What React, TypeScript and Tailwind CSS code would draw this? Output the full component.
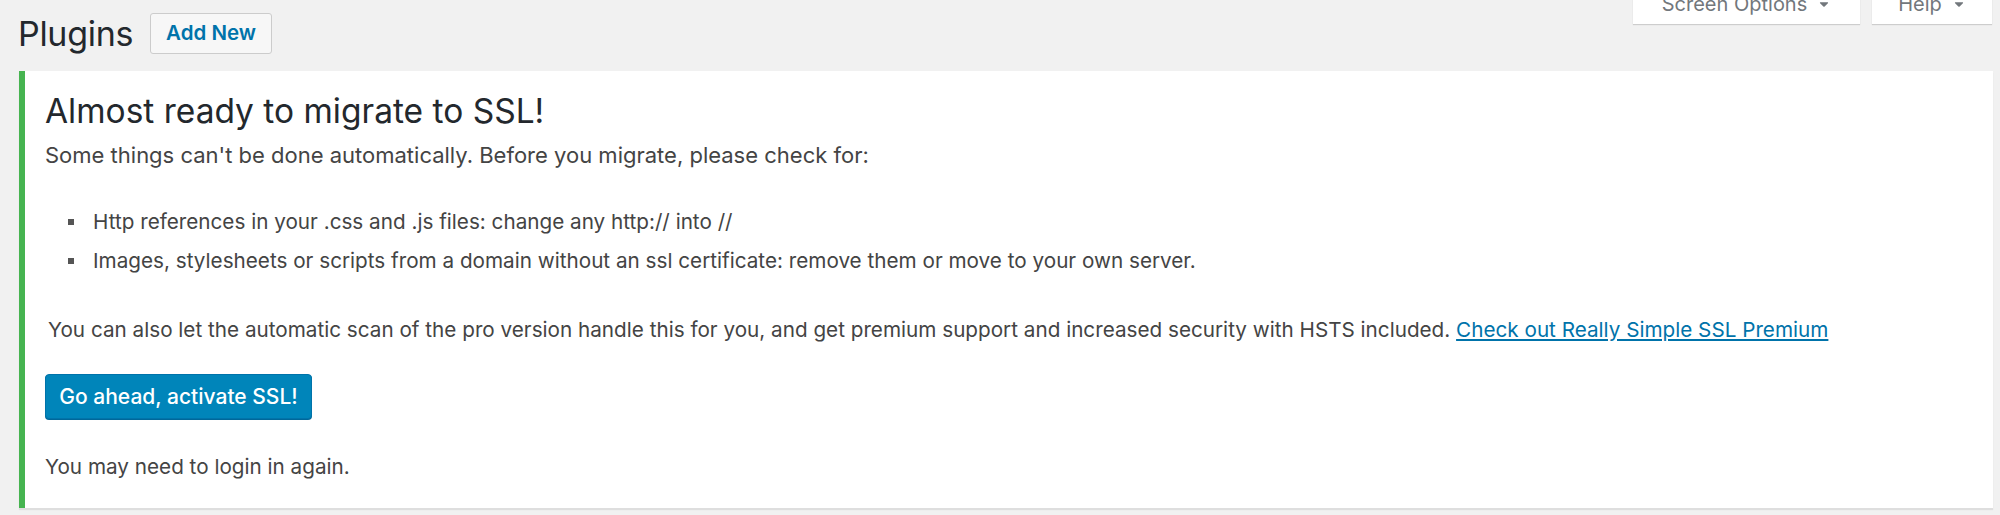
import { FaCaretDown } from 'react-icons/fa';

const bullets = [
  'Http references in your .css and .js files: change any http:// into //',
  'Images, stylesheets or scripts from a domain without an ssl certificate: remove them or move to your own server.',
];

const App = () => {
  return (
    <div className="min-h-[515px] overflow-hidden bg-[#f1f1f1] font-['Inter',sans-serif] text-[#444]">
      {/* header row */}
      <div className="flex items-start justify-between">
        <div className="ml-[18px] flex items-center gap-[17px] pt-[13px]">
          <h1 className="text-[34px] leading-[40px] tracking-[-0.3px] text-[#23282d]">Plugins</h1>
          <button className="h-[41px] rounded-[3px] border border-[#ccc] bg-[#f7f7f7] px-[15px] text-[20.5px] font-semibold text-[#0073aa]">
            Add New
          </button>
        </div>
        <div className="mr-[8px] mt-[-16px] flex gap-[12px]">
          <button className="flex h-[40px] w-[227px] items-center justify-center gap-[10px] bg-white text-[20px] text-[#72777c] shadow-[0_1px_1px_rgba(0,0,0,0.15)]">
            Screen Options <FaCaretDown className="h-[14px] w-[14px]" />
          </button>
          <button className="flex h-[40px] w-[120px] items-center justify-center gap-[10px] bg-white text-[20px] text-[#72777c] shadow-[0_1px_1px_rgba(0,0,0,0.15)]">
            Help <FaCaretDown className="h-[14px] w-[14px]" />
          </button>
        </div>
      </div>

      {/* notice */}
      <div className="ml-[19px] mr-[7px] mt-[17px] border-l-[6px] border-[#46b450] bg-white pb-[29px] pl-[20px] pt-[18px] shadow-[0_2px_1px_rgba(0,0,0,0.08)]">
        <h2 className="text-[33.5px] leading-[44px] text-[#23282d]">Almost ready to migrate to SSL!</h2>
        <p className="mt-[10px] text-[22px] leading-[24px]">
          Some things can't be done automatically. Before you migrate, please check for:
        </p>
        <ul className="mt-[43px] flex flex-col gap-[15px]">
          {bullets.map(b => (
            <li key={b} className="flex items-center text-[20.7px] leading-[24px]">
              <span className="ml-[23px] mr-[19px] h-[6px] w-[6px] shrink-0 bg-[#555]" />
              {b}
            </li>
          ))}
        </ul>
        <p className="mt-[45px] pl-[3px] text-[20.7px] leading-[24px]">
          You can also let the automatic scan of the pro version handle this for you, and get premium support and
          increased security with HSTS included.{' '}
          <a href="#" className="text-[#0073aa] underline">
            Check out Really Simple SSL Premium
          </a>
        </p>
        <button className="mt-[32px] h-[45px] w-[267px] rounded-[4px] border border-[#0073aa] bg-[#0085ba] text-[21px] font-medium text-white shadow-[0_1px_0_#006799]">
          Go ahead, activate SSL!
        </button>
        <p className="mt-[36px] text-[20.7px] leading-[24px]">You may need to login in again.</p>
      </div>
    </div>
  );
};

export default App;
